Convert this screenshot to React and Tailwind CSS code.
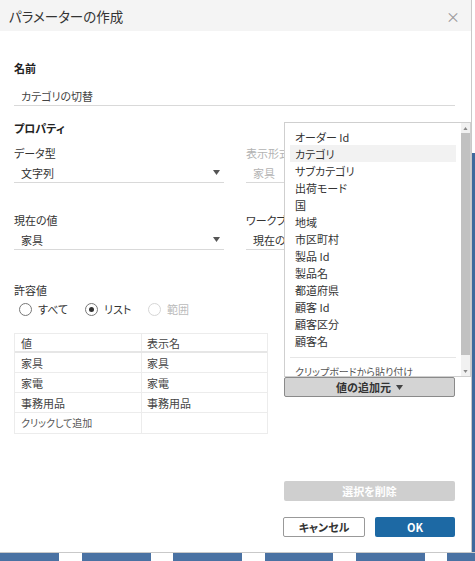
import React from 'react';

const fields = ['オーダー Id', 'カテゴリ', 'サブカテゴリ', '出荷モード', '国', '地域', '市区町村', '製品 Id', '製品名', '都道府県', '顧客 Id', '顧客区分', '顧客名'];
const rows = [
  ['家具', '家具'],
  ['家電', '家電'],
  ['事務用品', '事務用品'],
];

const Caret = ({ className = '' }) => (
  <svg width="7" height="5" viewBox="0 0 7 5" className={className}>
    <path d="M0 0h7L3.5 5z" fill="currentColor" />
  </svg>
);

const Select = ({ value, disabled, arrow = true }) => (
  <div className="mt-[3px] flex h-[20px] items-center justify-between whitespace-nowrap border-b border-[#d9d9d9] pl-[7px] pr-[4px]">
    <span className={disabled ? 'text-[#b3b3b3]' : 'text-[#333]'}>{value}</span>
    {arrow && <Caret className="text-[#555]" />}
  </div>
);

const Radio = ({ label, checked, disabled }) => (
  <label className="flex items-center gap-[6px]">
    <span
      className={`flex h-[13px] w-[13px] items-center justify-center rounded-full border ${
        disabled ? 'border-[#d6d6d6]' : 'border-[#777]'
      }`}
    >
      {checked && <span className="h-[5px] w-[5px] rounded-full bg-[#333]" />}
    </span>
    <span className={disabled ? 'text-[#bbb]' : 'text-[#333]'}>{label}</span>
  </label>
);

const FieldMenu = () => (
  <div className="absolute left-[284px] top-[122px] w-[187px]">
    <div className="flex h-[255px] overflow-hidden border border-[#cfcfcf] bg-white">
      <div className="flex-1 overflow-hidden pl-[5px] pr-[5px] pt-[5px]">
        {fields.map((f) => (
          <div
            key={f}
            className={`flex h-[17px] items-center px-[5px] text-[#333] ${f === 'カテゴリ' ? 'bg-[#f2f2f2]' : ''}`}
          >
            {f}
          </div>
        ))}
        <div className="mt-[8px] border-t border-[#e6e6e6]" />
        <div className="mt-[8px] px-[5px] text-[10px] leading-[12px] text-[#555]">クリップボードから貼り付け</div>
      </div>
      <div className="flex w-[9px] flex-col bg-[#f1f1f1]">
        <div className="flex h-[10px] items-center justify-center">
          <Caret className="h-[3px] w-[5px] rotate-180 text-[#888]" />
        </div>
        <div className="h-[222px] bg-[#c1c1c1]" />
        <div className="flex-1" />
        <div className="flex h-[10px] items-center justify-center">
          <Caret className="h-[3px] w-[5px] text-[#888]" />
        </div>
      </div>
    </div>
    <button className="flex h-[20px] w-[171px] items-center justify-center gap-[5px] rounded-[2px] border border-[#8a8a8a] bg-[#d4d4d4] font-bold text-[#333]">
      値の追加元
      <Caret className="text-[#444]" />
    </button>
  </div>
);

export default function App() {
  return (
    <div className="flex h-[561px] w-[475px] flex-col overflow-hidden bg-white text-[11px] leading-[14px] font-['Noto_Sans_CJK_JP','Noto_Sans',sans-serif] [font-feature-settings:'palt']">
      <div className="flex h-[552px]">
        {/* dialog */}
        <div className="relative flex w-[472px] flex-col border-r border-[#c8c8c8] bg-white">
          <div className="flex h-[31px] items-center justify-between bg-[#f4f4f4] pl-[9px] pr-[11px]">
            <span className="text-[13.5px] text-[#333]">パラメーターの作成</span>
            <span className="text-[14px] leading-none text-[#999]">×</span>
          </div>

          <div className="flex flex-1 flex-col pl-[14px] pr-[16px]">
            <div className="mt-[30px] font-bold text-[#222]">名前</div>
            <div className="mt-[11px] flex h-[20px] items-center border-b border-[#d9d9d9] pl-[7px] text-[#444]">
              カテゴリの切替
            </div>

            <div className="mt-[15px] font-bold text-[#222]">プロパティ</div>

            <div className="grid grid-cols-[210px_38px] gap-x-[22px]">
              <div>
                <div className="mt-[11px] text-[#333]">データ型</div>
                <Select value="文字列" />
                <div className="mt-[30px] text-[#333]">現在の値</div>
                <Select value="家具" />
              </div>
              <div className="overflow-hidden whitespace-nowrap">
                <div className="mt-[11px] text-[#b3b3b3]">表示形式</div>
                <Select value="家具" disabled arrow={false} />
                <div className="mt-[30px] text-[#333]">ワークブックを開いたときの値</div>
                <Select value="現在の値" arrow={false} />
              </div>
            </div>

            <div className="mt-[33px] text-[#333]">許容値</div>
            <div className="mt-[5px] flex h-[14px] items-center pl-[5px]">
              <div className="w-[66px]">
                <Radio label="すべて" />
              </div>
              <div className="w-[63px]">
                <Radio label="リスト" checked />
              </div>
              <Radio label="範囲" disabled />
            </div>

            <div className="mt-[17px] w-[254px] border border-[#ececec] text-[#444]">
              <div className="grid h-[19px] grid-cols-[127px_1fr] border-b-2 border-[#e6e6e6]">
                <div className="flex items-center border-r border-[#ececec] pl-[6px]">値</div>
                <div className="flex items-center pl-[5px]">表示名</div>
              </div>
              {rows.map(([v, n]) => (
                <div key={v} className="grid h-[20px] grid-cols-[127px_1fr] border-b border-[#ececec]">
                  <div className="flex items-center border-r border-[#ececec] pl-[6px]">{v}</div>
                  <div className="flex items-center pl-[5px]">{n}</div>
                </div>
              ))}
              <div className="grid h-[20px] grid-cols-[127px_1fr]">
                <div className="flex items-center border-r border-[#ececec] pl-[6px] text-[10px] text-[#555]">
                  クリックして追加
                </div>
                <div />
              </div>
            </div>

            <div className="mt-[47px] flex justify-end">
              <button className="h-[20px] w-[171px] rounded-[2px] bg-[#cfcfcf] font-bold text-white">選択を削除</button>
            </div>
            <div className="mt-[16px] flex justify-end gap-[10px]">
              <button className="h-[20px] w-[82px] rounded-[2px] border border-[#999] bg-white font-bold text-[#333]">
                キャンセル
              </button>
              <button className="h-[20px] w-[80px] rounded-[2px] bg-[#1d69a4] font-bold text-white">OK</button>
            </div>
          </div>

          <FieldMenu />
        </div>

        {/* page behind */}
        <div className="flex flex-1 flex-col">
          <div className="h-[153px] bg-white" />
          <div className="flex-1 bg-[#3f6a9d]" />
        </div>
      </div>

      <div className="flex flex-1 border-t border-[#c9c9c9] bg-white">
        <div className="w-[59px] bg-[#4a72a3]" />
        <div className="ml-[23px] w-[69px] bg-[#4a72a3]" />
        <div className="ml-[22px] w-[69px] bg-[#4a72a3]" />
        <div className="ml-[23px] w-[68px] bg-[#4a72a3]" />
        <div className="ml-[23px] w-[69px] bg-[#4a72a3]" />
        <div className="ml-[22px] flex-1 bg-[#4a72a3]" />
      </div>
    </div>
  );
}
